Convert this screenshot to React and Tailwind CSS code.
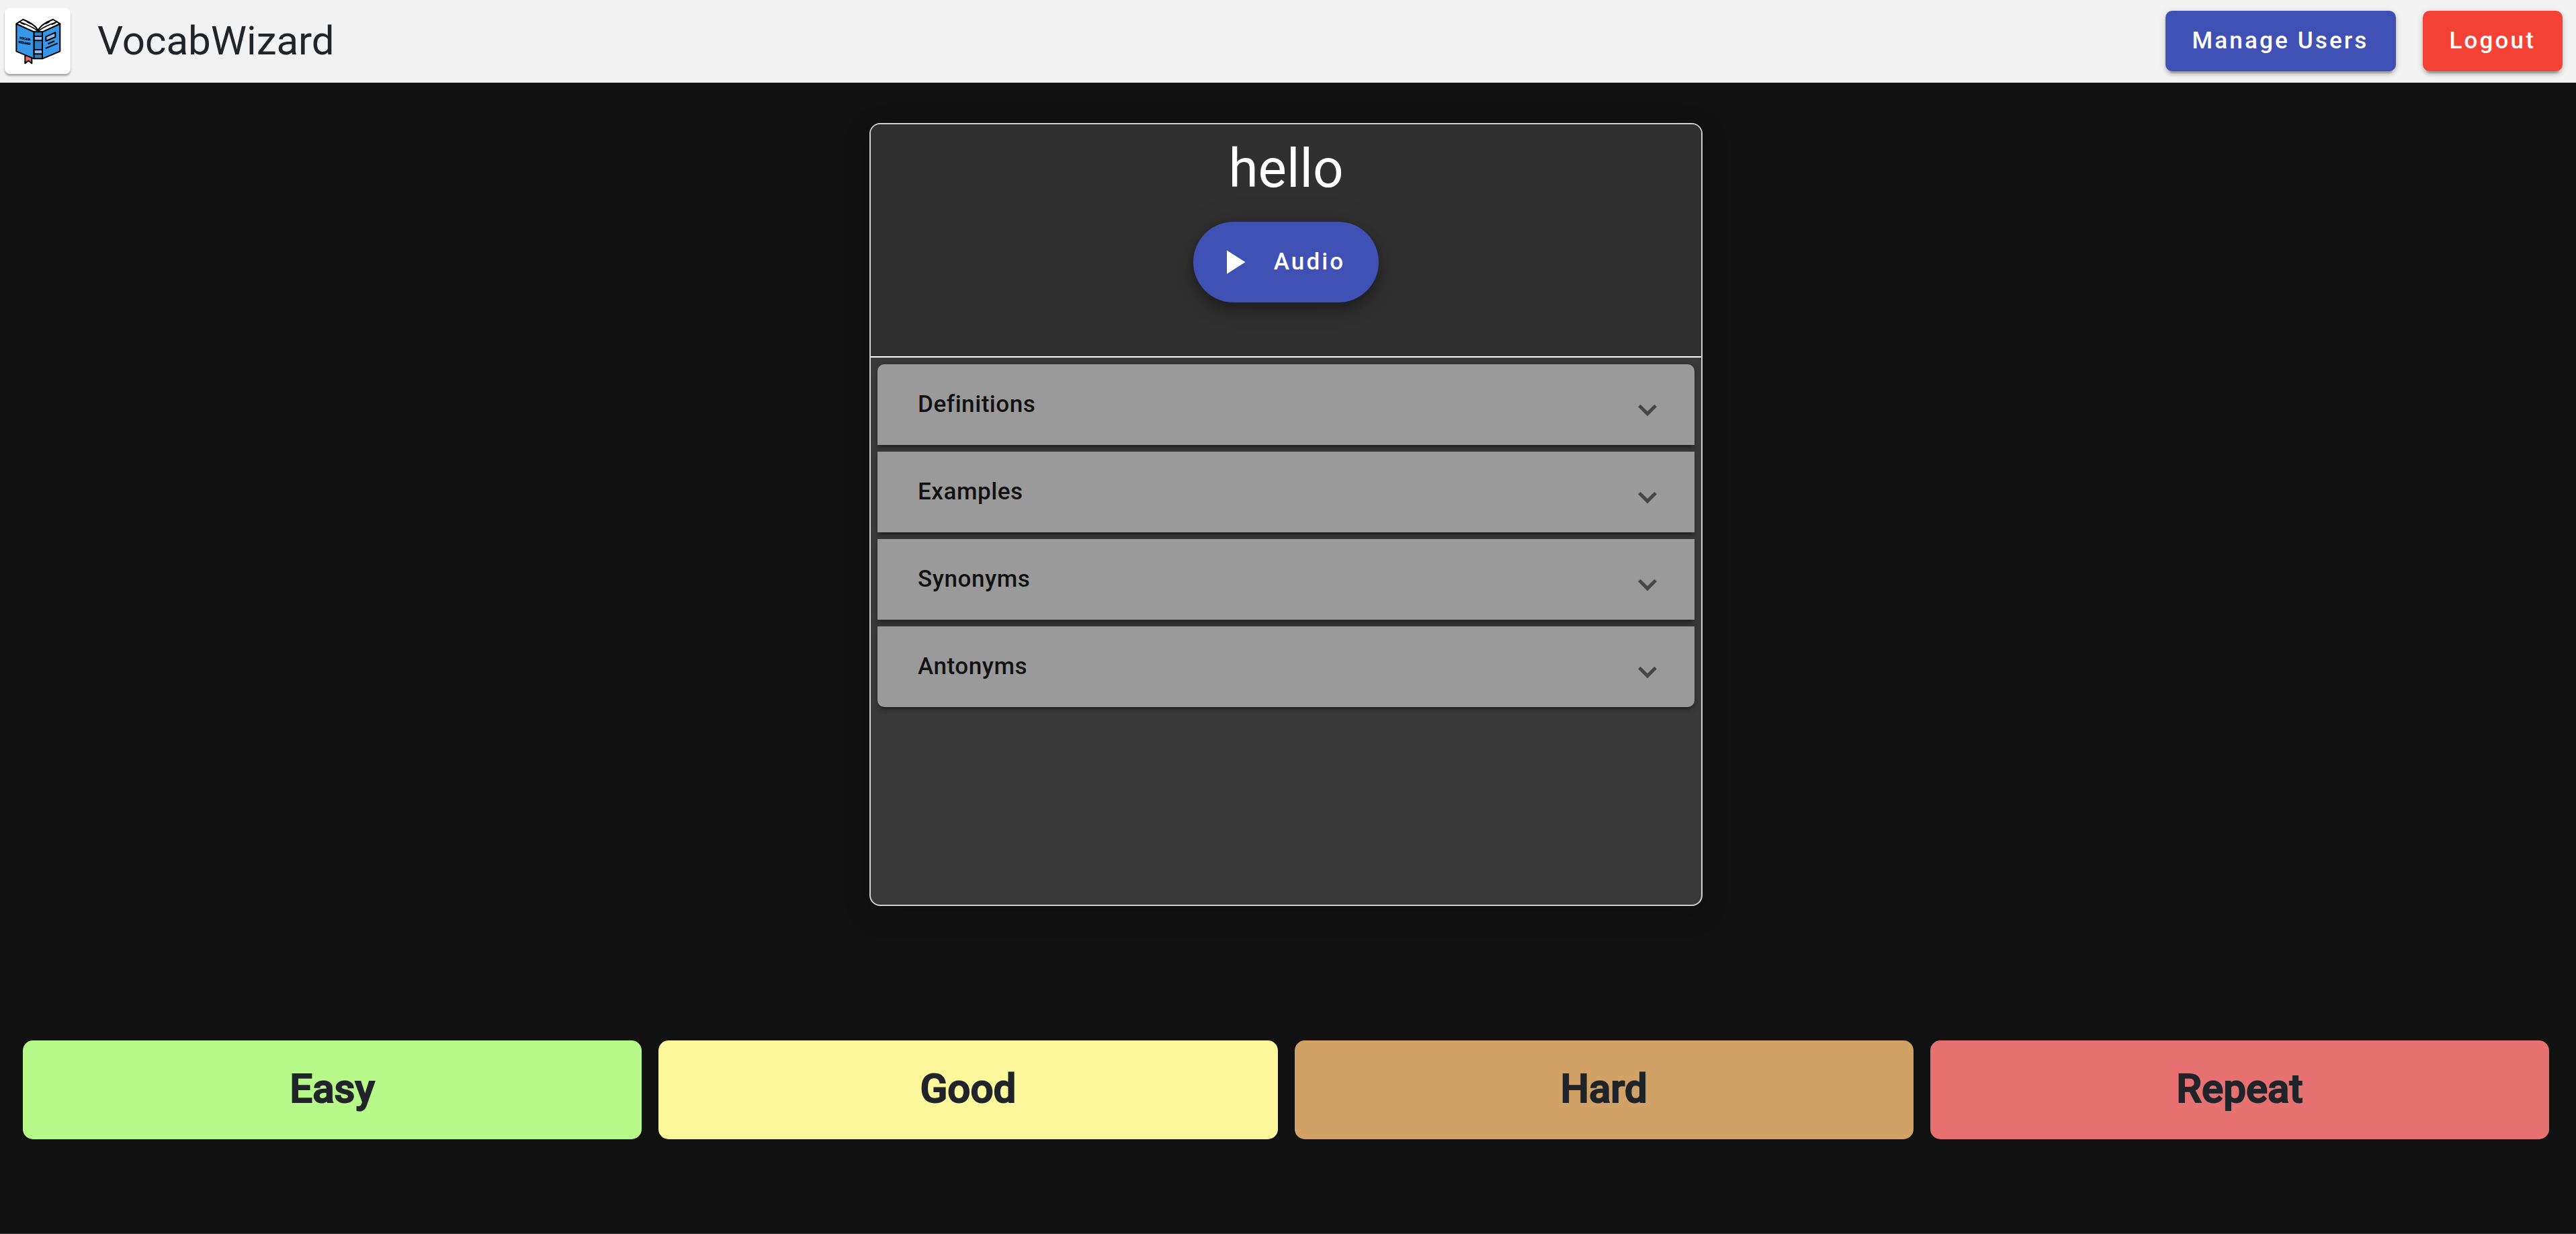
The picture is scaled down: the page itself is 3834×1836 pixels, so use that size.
const sections = ["Definitions", "Examples", "Synonyms", "Antonyms"];

const ratings = [
  { label: "Easy", color: "bg-[#b6f989]" },
  { label: "Good", color: "bg-[#fbf79a]" },
  { label: "Hard", color: "bg-[#d2a166]" },
  { label: "Repeat", color: "bg-[#e77171]" },
];

const raised =
  "shadow-[0_8px_2px_-5px_rgba(0,0,0,0.2),0_5px_5px_0_rgba(0,0,0,0.14),0_2px_12px_0_rgba(0,0,0,0.12)]";

function BookLogo() {
  return (
    <svg viewBox="21 33 294 294" className="size-full" role="img" aria-label="VocabWizard logo">
      <path d="M112 244V280L127 268L142 280V246Z" fill="#f06b6b" stroke="#000" strokeWidth="6" strokeLinejoin="round" />
      <g stroke="#000" strokeWidth="6" strokeLinejoin="round" strokeLinecap="round">
        <path d="M73 103L103 84C130 95 162 112 170 135C178 112 208 95 237 84L268 103L190 140H152Z" fill="#fff" />
        <path d="M73 104L152 140V259L73 226Z" fill="#3796e8" />
        <path d="M268 104L189 140V259L268 226Z" fill="#3796e8" />
        <path d="M152 139H189V259H152Z" fill="#2f82ca" />
        <path d="M152 159H189V178H152Z" fill="#8fc0ea" />
        <path d="M152 219H189V238H152Z" fill="#8fc0ea" />
        <path d="M205 161L247 142V162L205 180Z" fill="#8fc0ea" />
        <path d="M216 192L241 181M206 212L255 191" fill="none" />
        <path d="M85 94C115 105 150 118 165 134M256 94C226 105 190 118 175 134" fill="none" strokeWidth="5" />
        <path d="M94 100L108 106M122 95L136 103M247 100L233 106M219 95L205 103" fill="none" strokeWidth="5" />
      </g>
      <g fill="#000" fontFamily="'Liberation Serif', serif" fontStyle="italic" fontWeight="700" stroke="#000" strokeWidth="1">
        <text x="86" y="170" fontSize="14" transform="rotate(10 86 170)">VOCAB-</text>
        <text x="81" y="188" fontSize="14" transform="rotate(10 81 188)">WIZARD</text>
      </g>
    </svg>
  );
}

function Header() {
  return (
    <header className="flex items-center justify-between bg-[#f2f2f2] pt-3 pr-5 pb-[13px] pl-[7px]">
      <div className="flex items-center gap-10">
        <div className="size-[98px] overflow-hidden rounded-lg bg-white shadow-[0_3px_3px_rgba(0,0,0,0.3)]">
          <BookLogo />
        </div>
        <h1 className="text-[60px] leading-[72px] text-[#212529]">VocabWizard</h1>
      </div>
      <div className="flex gap-10">
        <button type="button" className={`h-[90px] rounded-[10px] bg-[#3f51b5] px-10 text-[35px] font-medium tracking-[0.09em] text-white ${raised}`}>
          Manage Users
        </button>
        <button type="button" className={`h-[90px] rounded-[10px] bg-[#f44336] px-10 text-[35px] font-medium tracking-[0.09em] text-white ${raised}`}>
          Logout
        </button>
      </div>
    </header>
  );
}

function Section({ title }) {
  return (
    <button
      type="button"
      aria-expanded="false"
      className={`flex h-[120px] items-center justify-between bg-[#9a9a9a] px-[60px] text-[35px] font-medium tracking-[0.016em] text-[#121212] first:rounded-t-[10px] last:rounded-b-[10px] ${raised}`}
    >
      {title}
      <svg viewBox="0 0 20 20" className="mt-4 -mr-1 h-7 w-7 overflow-visible" aria-hidden="true">
        <path d="M1.3 5.3L10 14L18.7 5.3" fill="none" stroke="#474747" strokeWidth="3.6" />
      </svg>
    </button>
  );
}

function WordCard() {
  return (
    <section className="flex min-h-[1165px] w-full max-w-[1240px] flex-col overflow-hidden rounded-2xl border-2 border-[#d0d0d0] bg-[#393939] shadow-[0_10px_40px_rgba(0,0,0,0.2)]">
      <div className="flex flex-col items-center gap-[29px] border-b-2 border-white bg-[#303030] pt-4 pb-20">
        <h2 className="text-[80px] leading-[100px] text-white">hello</h2>
        <button
          type="button"
          className="flex h-[120px] items-center gap-[30px] rounded-full bg-[#3f51b5] pr-[50px] pl-[30px] text-[35px] font-medium tracking-[0.09em] text-white shadow-[0_8px_12px_-2px_rgba(0,0,0,0.2),0_15px_25px_0_rgba(0,0,0,0.14),0_2px_45px_0_rgba(0,0,0,0.12)]"
        >
          <svg viewBox="0 0 24 24" className="size-[60px]" fill="currentColor" aria-hidden="true">
            <path d="M8 5v14l11-7z" />
          </svg>
          Audio
        </button>
      </div>
      <div className="flex flex-col gap-[10px] p-[10px]">
        {sections.map((title) => (
          <Section key={title} title={title} />
        ))}
      </div>
    </section>
  );
}

export default function App() {
  return (
    <div className="flex min-h-screen flex-col border-b border-[#3b393c] bg-[#121212] font-[Roboto,sans-serif]">
      <Header />
      <main className="flex flex-col items-center gap-[200px] pt-[60px] pr-10 pl-[34px]">
        <WordCard />
        <div className="grid w-full grid-cols-4 gap-[25px]">
          {ratings.map(({ label, color }) => (
            <button
              key={label}
              type="button"
              className={`h-[147px] rounded-[15px] pb-1 text-[60px] font-medium text-[#212529] [-webkit-text-stroke:2px_#212529] ${color}`}
            >
              {label}
            </button>
          ))}
        </div>
      </main>
    </div>
  );
}
